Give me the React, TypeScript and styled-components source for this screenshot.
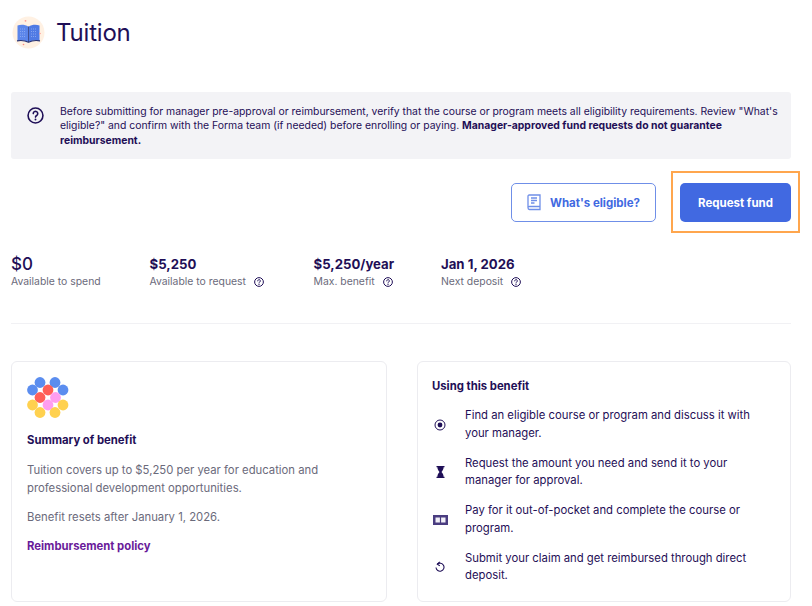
import React from 'react';
import styled, { createGlobalStyle } from 'styled-components';

const INK = '#1f0f57';
const MUTED = '#6b6a7b';

const GlobalStyle = createGlobalStyle`
  html, body { margin: 0; padding: 0; background: #ffffff; }
  body { font-family: Inter, 'Liberation Sans', sans-serif; color: ${INK}; }
`;

const Page = styled.div`
  width: 812px;
  height: 606px;
  box-sizing: border-box;
  padding: 16px 21px 0 11px;
  overflow: hidden;
`;

const Header = styled.header`
  display: flex;
  align-items: center;
  gap: 11px;
  height: 32px;
  padding-left: 1px;
`;

const Title = styled.h1`
  margin: 0;
  font-size: 24px;
  font-weight: 400;
  color: ${INK};
  letter-spacing: -0.2px;
`;

const Notice = styled.div`
  margin-top: 44px;
  height: 67px;
  box-sizing: border-box;
  background: #f3f3f6;
  border-radius: 3px;
  padding: 12.5px 8px 0 16px;
  display: flex;
  gap: 16px;
`;

const NoticeIcon = styled.div`
  padding-top: 2.5px;
  flex: none;
  line-height: 0;
`;

const NoticeText = styled.p`
  margin: 0;
  font-size: 10.4px;
  line-height: 14.5px;
  color: ${INK};
  strong { font-weight: 700; }
`;

const Actions = styled.div`
  margin-top: 24px;
  display: flex;
  justify-content: flex-end;
  gap: 24px;
`;

const OutlineButton = styled.button`
  width: 145px;
  height: 39px;
  box-sizing: border-box;
  background: #fff;
  border: 1px solid #6f8fe8;
  border-radius: 5px;
  color: #4169e1;
  font: 700 11.5px Inter, sans-serif;
  display: flex;
  align-items: center;
  justify-content: center;
  gap: 9px;
  padding: 0;
`;

const PrimaryWrap = styled.div`
  position: relative;
  line-height: 0;
`;

const Highlight = styled.div`
  position: absolute;
  inset: -12px -9px -11px -9px;
  border: 2px solid #ffa64d;
  pointer-events: none;
`;

const PrimaryButton = styled.button`
  width: 111px;
  height: 39px;
  border: 0;
  border-radius: 5px;
  background: #4169e1;
  color: #fff;
  font: 700 11.5px Inter, sans-serif;
  padding: 0;
`;

const Stats = styled.div`
  margin-top: 32px;
  display: flex;
  height: 35px;
`;

const Stat = styled.div<{ $width: number }>`
  width: ${p => p.$width}px;
  flex: none;
`;

const StatValue = styled.div<{ $big?: boolean }>`
  font-size: ${p => (p.$big ? 17 : 13.2)}px;
  font-weight: ${p => (p.$big ? 500 : 700)};
  line-height: 20px;
  height: 20px;
  color: ${INK};
`;

const StatLabel = styled.div`
  margin-top: 1px;
  display: flex;
  align-items: center;
  gap: 8px;
  font-size: 10.4px;
  line-height: 14px;
  color: ${MUTED};
`;

const Divider = styled.hr`
  margin: 34px 0 0;
  border: 0;
  border-top: 1px solid #f1f1f4;
`;

const Columns = styled.div`
  margin-top: 37px;
  display: grid;
  grid-template-columns: 376px 374px;
  justify-content: space-between;
`;

const Card = styled.section<{ $padX: number; $padTop: number }>`
  height: 241px;
  box-sizing: border-box;
  border: 1px solid #ececf0;
  border-radius: 6px;
  padding: ${p => p.$padTop}px ${p => p.$padX}px 0;
`;

const CardHeading = styled.h3<{ $top: number }>`
  margin: ${p => p.$top}px 0 0;
  font-size: 11.3px;
  line-height: 16px;
  font-weight: 700;
  color: ${INK};
`;

const Body = styled.p<{ $top: number }>`
  margin: ${p => p.$top}px 0 0;
  font-size: 11.3px;
  line-height: 18px;
  color: ${MUTED};
`;

const PolicyLink = styled.a`
  display: block;
  margin-top: 12px;
  font-size: 11.3px;
  line-height: 16px;
  font-weight: 700;
  color: #6a1b9a;
`;

const Steps = styled.ul`
  list-style: none;
  margin: 13px 0 0;
  padding: 0;
  display: flex;
  flex-direction: column;
  gap: 12.5px;
`;

const Step = styled.li`
  display: flex;
  align-items: center;
  gap: 17px;
  min-height: 35px;
`;

const StepIcon = styled.div`
  width: 16px;
  flex: none;
  display: flex;
  justify-content: center;
  line-height: 0;
`;

const StepText = styled.div`
  font-size: 11.3px;
  line-height: 17.5px;
  color: ${INK};
`;

const HelpIcon: React.FC<{ size?: number; weight?: number }> = ({ size = 10, weight = 1.6 }) => (
  <svg width={size} height={size} viewBox="0 0 16 16" fill="none" stroke={INK} strokeWidth={weight}>
    <circle cx="8" cy="8" r="7" />
    <path d="M5.9 6.2a2.1 2.1 0 1 1 3.2 1.8c-.7.4-1.1.8-1.1 1.5" strokeLinecap="round" />
    <circle cx="8" cy="11.8" r="0.9" fill={INK} stroke="none" />
  </svg>
);

const BookLogo: React.FC = () => (
  <svg width="33" height="33" viewBox="0 0 33 33">
    <circle cx="16.5" cy="16.5" r="16" fill="#fff1e3" />
    <path d="M5.5 9.500c3.500-1.200 7.500-1 11 1.200v15.300c-3.500-1.600-7.500-1.800-11-1.200z" fill="#5b85ea" />
    <path d="M27.500 9.500c-3.500-1.200-7.500-1-11 1.200v15.300c3.500-1.600 7.500-1.800 11-1.200z" fill="#4f7ae4" />
    <path d="M5 24.800c4-.6 8-.4 11.500 1.400 3.500-1.800 7.500-2 11.500-1.400" fill="none" stroke="#27306f" strokeWidth="1.200" />
    <path d="M16.500 10.500v15.500" stroke="#27306f" strokeWidth="0.700" />
    <path d="M8 13h6M8 15.500h6M8 18h6M8 20.500h6M19 13h6M19 15.500h6M19 18h6M19 20.500h6" stroke="#a9c0f7" strokeWidth="0.600" strokeDasharray="1 1" />
    <circle cx="13.500" cy="4.800" r="0.900" fill="#ff9c94" />
    <circle cx="28" cy="17.500" r="0.800" fill="#ff9c94" />
    <circle cx="11.500" cy="28.500" r="0.800" fill="#ff8a80" />
  </svg>
);

const EligibleBook: React.FC = () => (
  <svg width="14" height="17" viewBox="0 0 14 17" fill="none" stroke="#6f8fe8" strokeWidth="1.300">
    <path d="M1 13.500V2.200C1 1.500 1.500 1 2.200 1H13v11.500H2.500C1.600 12.500 1 13 1 13.800S1.600 15.500 2.500 15.500H13v-3" />
    <path d="M4 4h6M4 6.500h6M4 9h3.500" />
  </svg>
);

const Flower: React.FC = () => {
  const dots: [number, number, string][] = [
    [13, 5.5, '#5b8def'], [28, 5.5, '#5b8def'], [5.500, 13, '#5b8def'], [36, 13, '#5b8def'],
    [21, 13, '#ff5f57'], [13, 20.500, '#ff5f57'], [28.500, 20.500, '#ff9df0'], [21, 28, '#ff9df0'],
    [5.500, 28, '#ffd14f'], [36, 28, '#ffd14f'], [13, 35.500, '#ffd14f'], [28, 35.500, '#ffd14f'],
  ];
  return (
    <svg width="42" height="41" viewBox="0 0 42 41">
      {dots.map(([cx, cy, fill]) => (
        <circle key={`${cx}-${cy}`} cx={cx} cy={cy} r="5.400" fill={fill} />
      ))}
    </svg>
  );
};

const TargetIcon = () => (
  <svg width="12" height="12" viewBox="0 0 12 12" fill="none" stroke={INK} strokeWidth="1">
    <circle cx="6" cy="6" r="5" />
    <circle cx="6" cy="6" r="2.400" fill={INK} stroke="none" />
  </svg>
);

const HourglassIcon = () => (
  <svg width="9" height="12" viewBox="0 0 9 12" fill={INK}>
    <path d="M0.500 0h8v1.300H7.600c0 2-1 3.300-2.100 4.700 1.100 1.400 2.100 2.700 2.100 4.700h.9V12h-8v-1.300h.9c0-2 1-3.300 2.100-4.700C2.400 4.600 1.400 3.300 1.400 1.300H.5z" />
  </svg>
);

const OpenBookIcon = () => (
  <svg width="15" height="10" viewBox="0 0 15 10">
    <rect width="15" height="10" fill="#4a3d80" />
    <path d="M2.500 2.500h4.400v5H2.500zM8.100 2.500h4.400v5H8.100z" fill="#f1f0f7" />
  </svg>
);

const ResetIcon = () => (
  <svg width="10" height="12" viewBox="0 0 10 12" fill="none" stroke={INK} strokeWidth="1.100">
    <path d="M2.300 3.200A4 4 0 1 1 1 6.500" />
    <path d="M4.800 0.800L2.300 3.200l2.500 1.600" />
  </svg>
);

const stats = [
  { value: '$0', label: 'Available to spend', width: 138.5, big: true, help: false },
  { value: '$5,250', label: 'Available to request', width: 164, big: false, help: true },
  { value: '$5,250/year', label: 'Max. benefit', width: 127.5, big: false, help: true },
  { value: 'Jan 1, 2026', label: 'Next deposit', width: 120, big: false, help: true },
];

const steps = [
  { icon: <TargetIcon />, text: 'Find an eligible course or program and discuss it with your manager.' },
  { icon: <HourglassIcon />, text: 'Request the amount you need and send it to your manager for approval.' },
  { icon: <OpenBookIcon />, text: 'Pay for it out-of-pocket and complete the course or program.' },
  { icon: <ResetIcon />, text: 'Submit your claim and get reimbursed through direct deposit.' },
];

const App: React.FC = () => {
  return (
    <Page>
      <GlobalStyle />
      <Header>
        <BookLogo />
        <Title>Tuition</Title>
      </Header>
      <Notice>
        <NoticeIcon>
          <HelpIcon size={17} weight={1.5} />
        </NoticeIcon>
        <NoticeText>
          Before submitting for manager pre-approval or reimbursement, verify that the course or program meets all
          eligibility requirements. Review "What's eligible?" and confirm with the Forma team (if needed) before
          enrolling or paying. <strong>Manager-approved fund requests do not guarantee reimbursement.</strong>
        </NoticeText>
      </Notice>
      <Actions>
        <OutlineButton>
          <EligibleBook />
          What's eligible?
        </OutlineButton>
        <PrimaryWrap>
          <Highlight />
          <PrimaryButton>Request fund</PrimaryButton>
        </PrimaryWrap>
      </Actions>
      <Stats>
        {stats.map(stat => (
          <Stat key={stat.label} $width={stat.width}>
            <StatValue $big={stat.big}>{stat.value}</StatValue>
            <StatLabel>
              {stat.label}
              {stat.help && <HelpIcon />}
            </StatLabel>
          </Stat>
        ))}
      </Stats>
      <Divider />
      <Columns>
        <Card $padX={15} $padTop={15}>
          <Flower />
          <CardHeading $top={10}>Summary of benefit</CardHeading>
          <Body $top={13}>
            Tuition covers up to $5,250 per year for education and professional development opportunities.
          </Body>
          <Body $top={11}>Benefit resets after January 1, 2026.</Body>
          <PolicyLink>Reimbursement policy</PolicyLink>
        </Card>
        <Card $padX={14} $padTop={16}>
          <CardHeading $top={0}>Using this benefit</CardHeading>
          <Steps>
            {steps.map(step => (
              <Step key={step.text}>
                <StepIcon>{step.icon}</StepIcon>
                <StepText>{step.text}</StepText>
              </Step>
            ))}
          </Steps>
        </Card>
      </Columns>
    </Page>
  );
};

export default App;
